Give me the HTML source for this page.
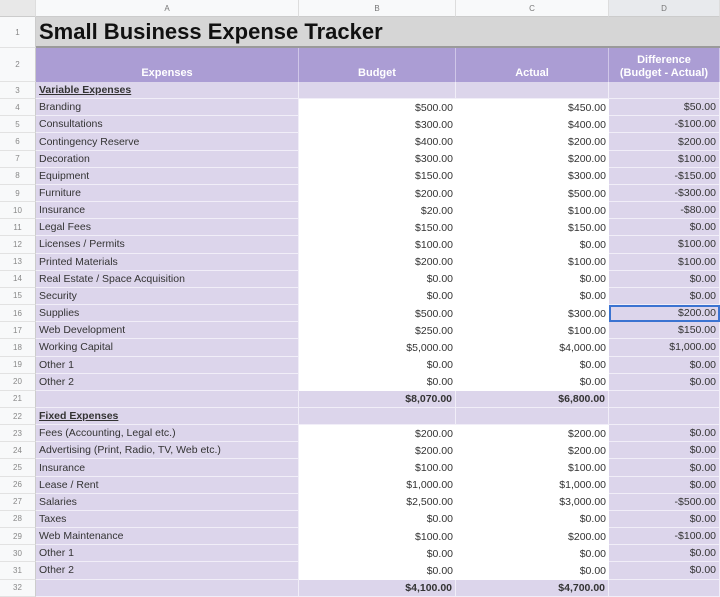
<!DOCTYPE html>
<html><head><style>
body{margin:0;width:720px;height:597px;overflow:hidden;background:#fff;font-family:"Liberation Sans",sans-serif;}
.g{display:grid;grid-template-columns:36px 263px 157px 153px 111px;grid-template-rows:17px 31px 34px repeat(30,17.17px);}
.g>div{box-sizing:border-box;font-size:10.5px;color:#333;white-space:nowrap;overflow:hidden;display:flex;align-items:center;padding:0 3px;}
.h{background:#f8f9fa;color:#777!important;font-size:8px!important;justify-content:center;border-right:1px solid #ddd;border-bottom:1px solid #ccc;}
.n{background:#f8f9fa;color:#888!important;font-size:8px!important;justify-content:center;border-right:1px solid #ccc;border-bottom:1px solid #e2e2e2;}
.p{background:#dcd5eb;border-bottom:1px solid #f1eef8;border-right:1px solid #f1eef8;}
.w{background:#fff;justify-content:flex-end;}
.r{justify-content:flex-end;}
.t{background:#d6d6d6;font-size:22px!important;font-weight:bold;color:#111!important;grid-column:2/6;border-bottom:2px solid #9a9a9a;}
.hd{background:#ab9dd4;color:#fff!important;font-weight:bold;font-size:11px!important;justify-content:center;align-items:flex-end!important;padding-bottom:2px!important;border-right:1px solid #cfc6e8;text-align:center;line-height:13px;}
.b{font-weight:bold;}
.u{font-weight:bold;text-decoration:underline;}
.sel{outline:2px solid #3b73d1;outline-offset:-2px;}
</style></head><body>
<div class="g" id="g">
<div class="h" style="background:#e8e8e8"></div><div class="h">A</div><div class="h">B</div><div class="h">C</div><div class="h" style="background:#e8eaed">D</div>
<div class="n">1</div><div class="t">Small Business Expense Tracker</div>
<div class="n">2</div><div class="hd">Expenses</div><div class="hd">Budget</div><div class="hd">Actual</div><div class="hd">Difference<br>(Budget - Actual)</div>
</div>
<script>
const rows=[
["u","Variable Expenses"],
["","Branding","$500.00","$450.00","$50.00"],
["","Consultations","$300.00","$400.00","-$100.00"],
["","Contingency Reserve","$400.00","$200.00","$200.00"],
["","Decoration","$300.00","$200.00","$100.00"],
["","Equipment","$150.00","$300.00","-$150.00"],
["","Furniture","$200.00","$500.00","-$300.00"],
["","Insurance","$20.00","$100.00","-$80.00"],
["","Legal Fees","$150.00","$150.00","$0.00"],
["","Licenses / Permits","$100.00","$0.00","$100.00"],
["","Printed Materials","$200.00","$100.00","$100.00"],
["","Real Estate / Space Acquisition","$0.00","$0.00","$0.00"],
["","Security","$0.00","$0.00","$0.00"],
["s","Supplies","$500.00","$300.00","$200.00"],
["","Web Development","$250.00","$100.00","$150.00"],
["","Working Capital","$5,000.00","$4,000.00","$1,000.00"],
["","Other 1","$0.00","$0.00","$0.00"],
["","Other 2","$0.00","$0.00","$0.00"],
["tot","","$8,070.00","$6,800.00",""],
["u","Fixed Expenses"],
["","Fees (Accounting, Legal etc.)","$200.00","$200.00","$0.00"],
["","Advertising (Print, Radio, TV, Web etc.)","$200.00","$200.00","$0.00"],
["","Insurance","$100.00","$100.00","$0.00"],
["","Lease / Rent","$1,000.00","$1,000.00","$0.00"],
["","Salaries","$2,500.00","$3,000.00","-$500.00"],
["","Taxes","$0.00","$0.00","$0.00"],
["","Web Maintenance","$100.00","$200.00","-$100.00"],
["","Other 1","$0.00","$0.00","$0.00"],
["","Other 2","$0.00","$0.00","$0.00"],
["tot","","$4,100.00","$4,700.00",""]];
let h="";rows.forEach((r,i)=>{h+=`<div class="n">${i+3}</div>`;
if(r[0]=="u"){h+=`<div class="p u">${r[1]}</div><div class="p"></div><div class="p"></div><div class="p"></div>`;}
else if(r[0]=="tot"){h+=`<div class="p"></div><div class="p r b">${r[2]}</div><div class="p r b">${r[3]}</div><div class="p"></div>`;}
else{h+=`<div class="p">${r[1]}</div><div class="w">${r[2]}</div><div class="w">${r[3]}</div><div class="p r${r[0]=="s"?" sel":""}">${r[4]}</div>`;}});
document.getElementById("g").insertAdjacentHTML("beforeend",h);
</script>
</body></html>
